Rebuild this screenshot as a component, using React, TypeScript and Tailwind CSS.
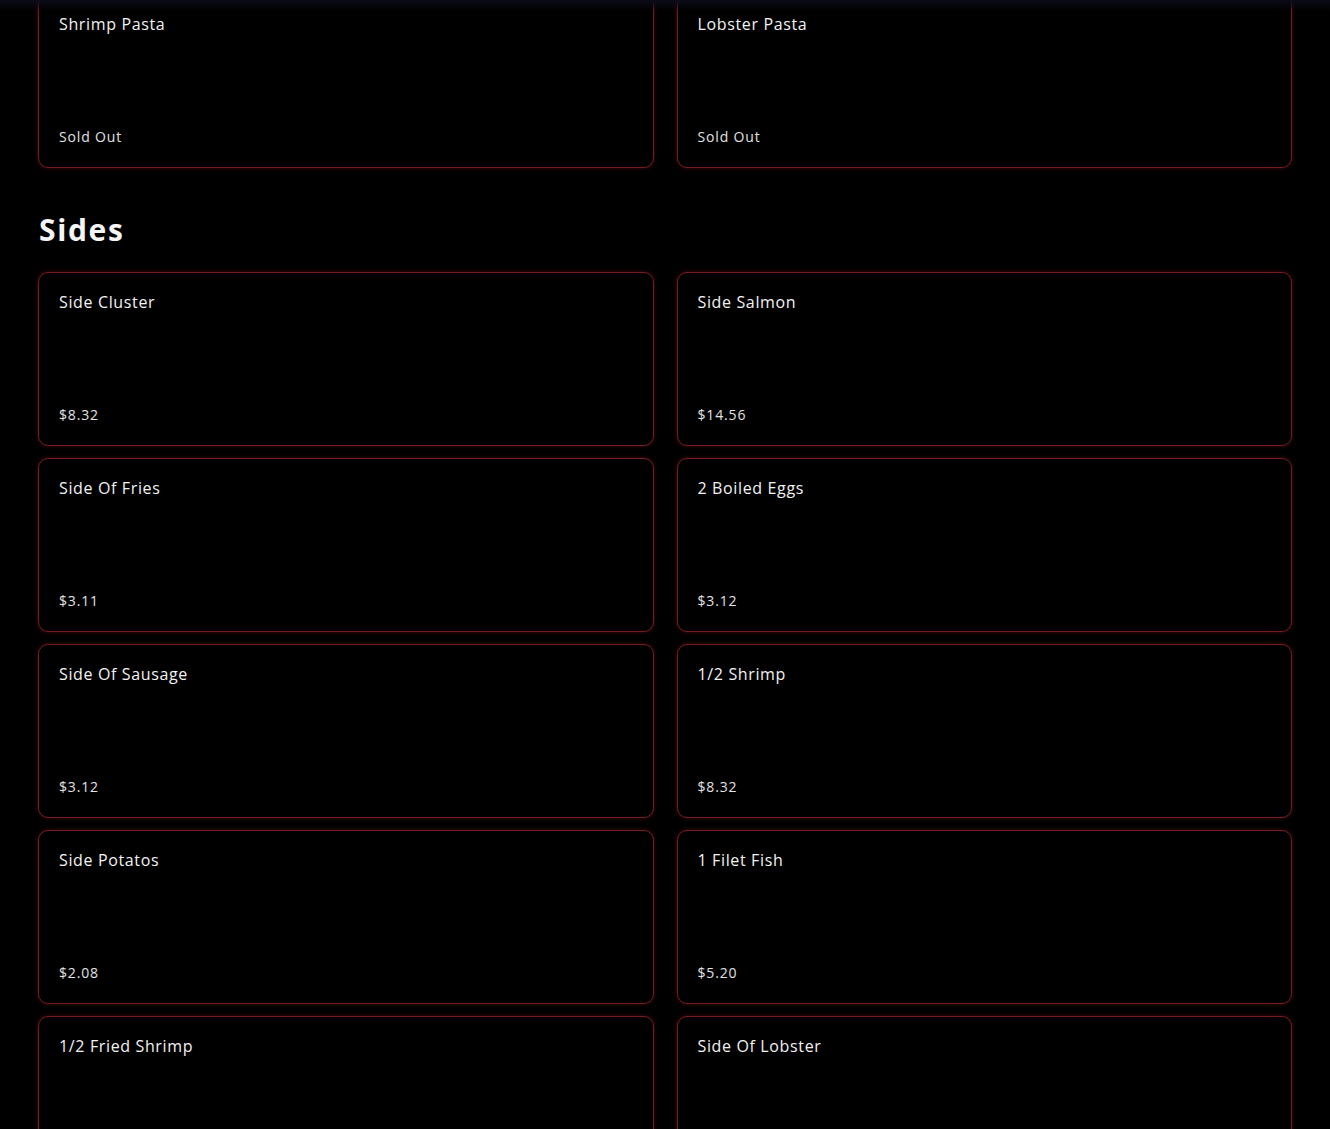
import React from 'react';

// ============================================
// Menu data
// ============================================

interface MenuItem {
    name: string;
    price: string;
}

const pastas: MenuItem[] = [
    { name: 'Shrimp Pasta', price: 'Sold Out' },
    { name: 'Lobster Pasta', price: 'Sold Out' },
];

const sides: MenuItem[] = [
    { name: 'Side Cluster', price: '$8.32' },
    { name: 'Side Salmon', price: '$14.56' },
    { name: 'Side Of Fries', price: '$3.11' },
    { name: '2 Boiled Eggs', price: '$3.12' },
    { name: 'Side Of Sausage', price: '$3.12' },
    { name: '1/2 Shrimp', price: '$8.32' },
    { name: 'Side Potatos', price: '$2.08' },
    { name: '1 Filet Fish', price: '$5.20' },
    { name: '1/2 Fried Shrimp', price: '' },
    { name: 'Side Of Lobster', price: '' },
];

// ============================================
// Card
// ============================================

function MenuCard({ item }: { item: MenuItem }) {
    return (
        <div className="h-[174px] rounded-[10px] border border-[#761c1f] bg-black shadow-[0_0_4px_rgba(160,30,40,0.4)] px-[20px] pt-[18px] pb-[20px] flex flex-col justify-between">
            <p className="text-[16px] leading-[22px] tracking-[0.04em] text-[#f2f2f2]">{item.name}</p>
            <p className="text-[14px] leading-[20px] tracking-[0.06em] text-[#e2e2e2]">{item.price}</p>
        </div>
    );
}

export default function App() {
    return (
        <div
            className="relative h-[1129px] overflow-hidden bg-black"
            style={{ fontFamily: '"Open Sans", "Liberation Sans", sans-serif' }}
        >
            <div className="absolute inset-x-0 top-0 h-[12px] bg-gradient-to-b from-[#0b0b18] to-transparent pointer-events-none z-10" />

            <div className="pl-[38px] pr-[38px] -mt-[6px]">
                {/* Previous section (scrolled) */}
                <div className="grid grid-cols-2 gap-x-[23px] gap-y-[12px]">
                    {pastas.map((item) => (
                        <MenuCard key={item.name} item={item} />
                    ))}
                </div>

                {/* Sides */}
                <h2 className="mt-[44px] mb-[24px] text-[30px] leading-[36px] font-bold tracking-[0.055em] text-[#f5f5f5] pl-px">
                    Sides
                </h2>
                <div className="grid grid-cols-2 gap-x-[23px] gap-y-[12px]">
                    {sides.map((item) => (
                        <MenuCard key={item.name} item={item} />
                    ))}
                </div>
            </div>
        </div>
    );
}
